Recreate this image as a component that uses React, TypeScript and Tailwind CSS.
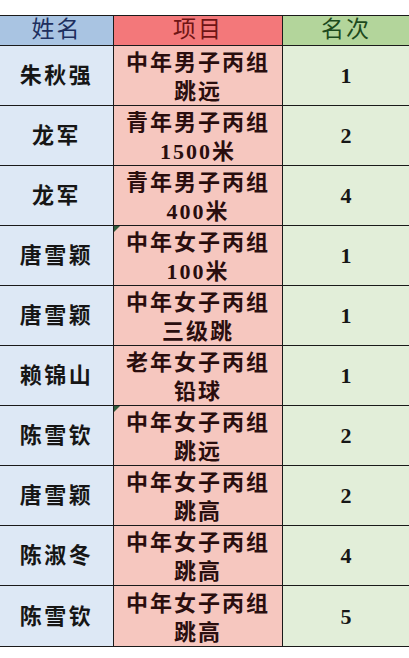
import React from "react";

const rows: { name: string; l1: string; l2: string; rank: string; mark?: boolean }[] = [
  { name: "朱秋强", l1: "中年男子丙组", l2: "跳远", rank: "1" },
  { name: "龙军", l1: "青年男子丙组", l2: "1500米", rank: "2" },
  { name: "龙军", l1: "青年男子丙组", l2: "400米", rank: "4" },
  { name: "唐雪颖", l1: "中年女子丙组", l2: "100米", rank: "1", mark: true },
  { name: "唐雪颖", l1: "中年女子丙组", l2: "三级跳", rank: "1" },
  { name: "赖锦山", l1: "老年女子丙组", l2: "铅球", rank: "1" },
  { name: "陈雪钦", l1: "中年女子丙组", l2: "跳远", rank: "2", mark: true },
  { name: "唐雪颖", l1: "中年女子丙组", l2: "跳高", rank: "2" },
  { name: "陈淑冬", l1: "中年女子丙组", l2: "跳高", rank: "4" },
  { name: "陈雪钦", l1: "中年女子丙组", l2: "跳高", rank: "5" },
];

const cjk = { fontFamily: '"Liberation Serif", "Noto Sans CJK SC", serif' };

export default function App() {
  return (
    <div className="w-[409px] h-[658px] bg-white overflow-hidden" style={cjk}>
      <div className="h-[15px]" />
      <div className="grid grid-cols-[114px_169px_126px] border-t border-b border-[#1a1a1a]">
        <div className="h-[30px] bg-[#a9c4e2] border-b border-r border-[#1a1a1a] flex items-center justify-center text-[23px] text-[#1d2f5e] tracking-[2px]">
          姓名
        </div>
        <div className="h-[30px] bg-[#f3787a] border-b border-r border-[#1a1a1a] flex items-center justify-center text-[23px] text-[#6e1414] tracking-[2px]">
          项目
        </div>
        <div className="h-[30px] bg-[#b3d59b] border-b border-[#1a1a1a] flex items-center justify-center text-[23px] text-[#1d4a1d] tracking-[2px]">
          名次
        </div>
        {rows.map((r, i) => {
          const last = i === rows.length - 1;
          return (
            <React.Fragment key={i}>
              <div
                className={`h-[60px] bg-[#dde8f5] border-r border-[#1a1a1a] flex items-center justify-center text-[22px] font-bold text-[#161616] tracking-[2.5px] ${last ? "" : "border-b"}`}
              >
                {r.name}
              </div>
              <div
                className={`relative h-[60px] bg-[#f6c7bf] border-r border-[#1a1a1a] flex flex-col items-center justify-center pt-[3px] text-[22px] leading-[29px] font-bold text-[#2a0e0e] tracking-[2px] ${last ? "" : "border-b"}`}
              >
                {r.mark && (
                  <div className="absolute left-0 top-0 w-0 h-0 border-t-[6px] border-t-[#2f5a3a] border-r-[6px] border-r-transparent" />
                )}
                <div>{r.l1}</div>
                <div>{r.l2}</div>
              </div>
              <div
                className={`h-[60px] bg-[#e2eed9] border-[#1a1a1a] flex items-center justify-center text-[22px] font-bold text-[#161616] ${last ? "" : "border-b"}`}
              >
                {r.rank}
              </div>
            </React.Fragment>
          );
        })}
      </div>
    </div>
  );
}
